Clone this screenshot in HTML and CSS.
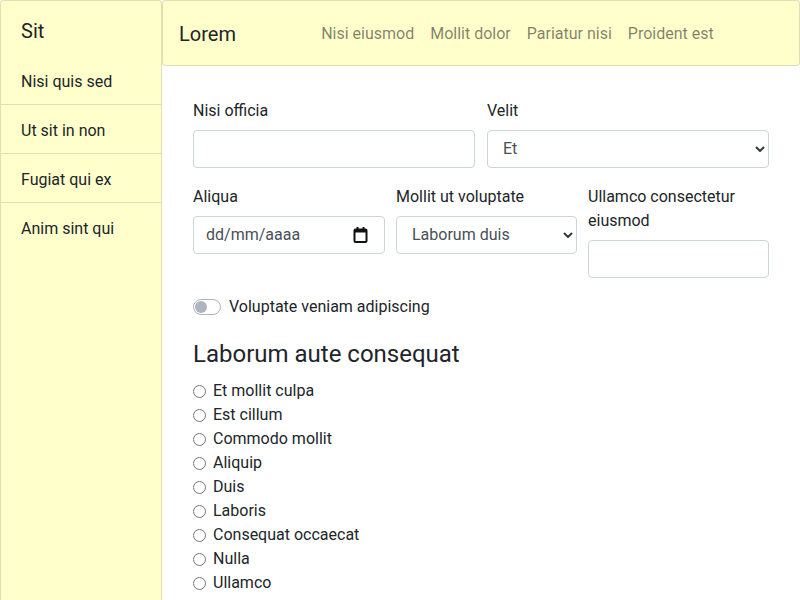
FILE: index.html
```html
<!DOCTYPE html>
<html>
<head>
<meta charset="utf-8">
<link rel="stylesheet" href="styles.css">
</head>
<body>
<div class="layout">
  <aside class="sidebar">
    <div class="sidebar-title">Sit</div>
    <ul class="side-list">
      <li>Nisi quis sed</li>
      <li>Ut sit in non</li>
      <li>Fugiat qui ex</li>
      <li>Anim sint qui</li>
    </ul>
  </aside>
  <main class="main">
    <nav class="navbar">
      <span class="brand">Lorem</span>
      <div class="nav-links">
        <a>Nisi eiusmod</a>
        <a>Mollit dolor</a>
        <a>Pariatur nisi</a>
        <a>Proident est</a>
      </div>
    </nav>
    <form class="form">
      <div class="row row-2">
        <div class="group">
          <label class="label">Nisi officia</label>
          <input class="control" type="text">
        </div>
        <div class="group">
          <label class="label">Velit</label>
          <div class="select-wrap">
            <select class="control select"><option>Et</option></select>
            <svg class="chev" width="10" height="6" viewBox="0 0 10 6"><path d="M1 1 L5 5 L9 1" fill="none" stroke="#343a40" stroke-width="2"/></svg>
          </div>
        </div>
      </div>
      <div class="row row-3">
        <div class="group">
          <label class="label">Aliqua</label>
          <div class="control date">
            <span class="date-text">dd/mm/aaaa</span>
            <svg class="cal" width="15" height="16" viewBox="0 0 15 16"><rect x="3.5" y="0" width="2" height="3" fill="#111"/><rect x="9.5" y="0" width="2" height="3" fill="#111"/><rect x="1.5" y="2.5" width="12" height="12.5" rx="1" fill="none" stroke="#111" stroke-width="2"/><rect x="1.5" y="2" width="12" height="3.5" fill="#111"/></svg>
          </div>
        </div>
        <div class="group">
          <label class="label">Mollit ut voluptate</label>
          <div class="select-wrap">
            <select class="control select"><option>Laborum duis</option></select>
            <svg class="chev" width="10" height="6" viewBox="0 0 10 6"><path d="M1 1 L5 5 L9 1" fill="none" stroke="#343a40" stroke-width="2"/></svg>
          </div>
        </div>
        <div class="group">
          <label class="label">Ullamco consectetur eiusmod</label>
          <input class="control" type="text">
        </div>
      </div>
      <div class="switch">
        <span class="track"><span class="knob"></span></span>
        <span>Voluptate veniam adipiscing</span>
      </div>
      <h4 class="heading">Laborum aute consequat</h4>
      <div class="radios">
        <label class="radio"><input type="radio" name="r"><span>Et mollit culpa</span></label>
        <label class="radio"><input type="radio" name="r"><span>Est cillum</span></label>
        <label class="radio"><input type="radio" name="r"><span>Commodo mollit</span></label>
        <label class="radio"><input type="radio" name="r"><span>Aliquip</span></label>
        <label class="radio"><input type="radio" name="r"><span>Duis</span></label>
        <label class="radio"><input type="radio" name="r"><span>Laboris</span></label>
        <label class="radio"><input type="radio" name="r"><span>Consequat occaecat</span></label>
        <label class="radio"><input type="radio" name="r"><span>Nulla</span></label>
        <label class="radio"><input type="radio" name="r"><span>Ullamco</span></label>
        <label class="radio"><input type="radio" name="r"><span>Sunt</span></label>
      </div>
    </form>
  </main>
</div>
</body>
</html>
```
FILE: styles.css
```css
* { box-sizing: border-box; }
html, body { margin: 0; padding: 0; }
body {
  font-family: Roboto, "Noto Sans", sans-serif;
  font-size: 16px;
  line-height: 24px;
  color: #212529;
  background: #fff;
}
.layout {
  display: flex;
  align-items: stretch;
  min-height: 100vh;
}
.sidebar {
  width: 162px;
  flex: none;
  background: #ffffcc;
  border: 1px solid rgba(0,0,0,.125);
  border-radius: 4px;
}
.sidebar-title {
  font-size: 20px;
  line-height: 24px;
  padding: 18px 20px 13px;
}
.side-list {
  list-style: none;
  margin: 0;
  padding: 0;
}
.side-list li {
  padding: 14px 20px 10px;
  border-top: 1px solid rgba(0,0,0,.125);
}
.side-list li:first-child { border-top: 0; }
.main {
  flex: 1;
  min-width: 0;
}
.navbar {
  display: flex;
  align-items: center;
  height: 66px;
  padding: 2px 16px 0;
  background: #ffffcc;
  border: 1px solid rgba(0,0,0,.125);
  border-radius: 4px;
}
.brand {
  font-size: 20px;
  line-height: 30px;
  margin-right: 16px;
}
.nav-links {
  flex: 1;
  display: flex;
  justify-content: center;
}
.nav-links a {
  padding: 0 8px;
  color: rgba(0,0,0,.5);
}
.form {
  max-width: 576px;
  margin: 33px auto 0;
}
.row {
  display: grid;
  column-gap: 12px;
  align-items: start;
}
.row-2 { grid-template-columns: 1fr 1fr; }
.row-3 { grid-template-columns: 192px 181px 1fr; column-gap: 11px; }
.group {
  margin-bottom: 17px;
}
.label {
  display: block;
  margin-bottom: 7px;
}
.control {
  display: block;
  width: 100%;
  height: 38px;
  padding: 6px 12px;
  font: inherit;
  color: #495057;
  background: #fff;
  border: 1px solid #ced4da;
  border-radius: 4px;
  outline: none;
}
.select-wrap { position: relative; }
.select {
  -webkit-appearance: none;
  appearance: none;
  padding-left: 15px;
  padding-right: 28px;
}
.chev {
  position: absolute;
  right: 4px;
  top: 16px;
  pointer-events: none;
}
.date {
  display: flex;
  align-items: center;
  justify-content: space-between;
  padding: 0 16px 0 12px;
}
.date-text { color: #495057; }
.switch {
  display: flex;
  align-items: center;
  gap: 8px;
}
.track {
  width: 28px;
  height: 16px;
  border: 1px solid #adb5bd;
  border-radius: 8px;
  background: #fff;
  display: flex;
  align-items: center;
  padding-left: 1px;
}
.knob {
  width: 12px;
  height: 12px;
  border-radius: 50%;
  background: #adb5bd;
}
.heading {
  font-size: 24px;
  line-height: 29px;
  font-weight: 400;
  margin: 21px 0 10px;
}
.radios { display: flex; flex-direction: column; }
.radio {
  display: flex;
  align-items: center;
  height: 24px;
}
.radio input {
  margin: 0 7px 0 0;
  width: 13px;
  height: 13px;
}
```
